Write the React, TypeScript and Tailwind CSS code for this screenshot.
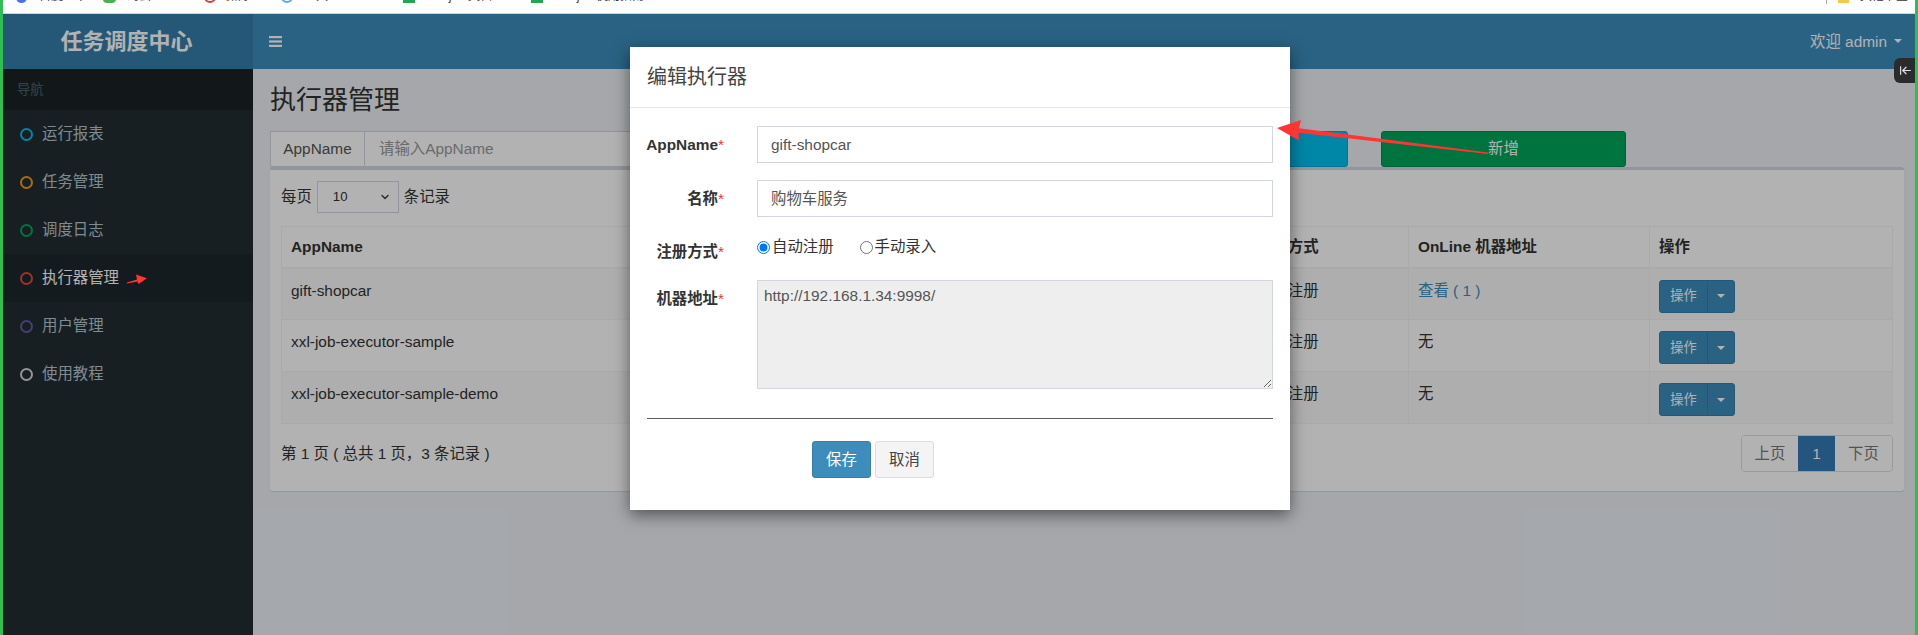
import { ArrowLeftToLine, ChevronDown } from "lucide-react"

const menu = [
  { label: "运行报表", ring: "border-[#00c0ef]" },
  { label: "任务管理", ring: "border-[#f39c12]" },
  { label: "调度日志", ring: "border-[#00a65a]" },
  { label: "执行器管理", ring: "border-[#dd4b39]", active: true },
  { label: "用户管理", ring: "border-[#605ca8]" },
  { label: "使用教程", ring: "border-[#d2d6de]" },
]

const groups = [
  { appname: "gift-shopcar", title: "购物车服务", online: "查看 ( 1 )", link: true },
  { appname: "xxl-job-executor-sample", title: "示例执行器", online: "无" },
  { appname: "xxl-job-executor-sample-demo", title: "示例执行器Demo", online: "无" },
]

function Caret({ className = "" }: { className?: string }) {
  return (
    <svg width="8" height="4" viewBox="0 0 8 4" className={className}>
      <path d="M0 0 L8 0 L4 4 Z" fill="currentColor" />
    </svg>
  )
}

function BookmarkBar() {
  return (
    <div className="flex h-[14px] items-start overflow-hidden border-b border-[#d4d4d4] bg-white text-[12px] leading-[12px] text-[#333]">
      <div className="-mt-[10px] ml-[16px] flex items-start gap-[12px]">
        <span className="h-[13px] w-[11px] rounded-full bg-[#4e6ef2]" />
        <span className="w-[46px] whitespace-nowrap">百度一下</span>
      </div>
      <div className="-mt-[10px] ml-[18px] flex items-start gap-[11px]">
        <span className="h-[13px] w-[13px] rounded-sm bg-[#4caf50]" />
        <span className="w-[58px] whitespace-nowrap">码云 Gitee</span>
      </div>
      <div className="-mt-[10px] ml-[19px] flex items-start gap-[9px]">
        <span className="h-[13px] w-[12px] rounded-full border-2 border-[#e0393e]" />
        <span className="w-[37px] whitespace-nowrap">微博</span>
      </div>
      <div className="-mt-[10px] ml-[19px] flex items-start gap-[11px]">
        <span className="h-[13px] w-[12px] rounded-full border-2 border-[#5aa9ee]" />
        <span className="w-[31px] whitespace-nowrap">工具</span>
      </div>
      <div className="-mt-[10px] ml-[68px] flex items-start gap-[15px]">
        <span className="h-[13px] w-[12px] bg-[#21a84f]" />
        <span className="w-[74px] whitespace-nowrap">xxl-job 文档</span>
      </div>
      <div className="-mt-[10px] ml-[27px] flex items-start gap-[15px]">
        <span className="h-[13px] w-[12px] bg-[#21a84f]" />
        <span className="w-[98px] whitespace-nowrap">xxl-job 使用指南</span>
      </div>
      <div className="-mt-[10px] ml-auto mr-[10px] flex items-start gap-[11px]">
        <span className="h-[14px] w-px bg-[#aaa]" />
        <span className="h-[13px] w-[11px] bg-[#f5c84b]" />
        <span className="w-[48px] whitespace-nowrap">其他书签</span>
      </div>
    </div>
  )
}

function Header() {
  return (
    <header className="flex h-[55px] shrink-0">
      <div className="flex w-[253px] items-center justify-center bg-[#367fa9] text-[22px] font-bold text-white">
        任务调度中心
      </div>
      <div className="flex flex-1 items-center justify-between bg-[#3c8dbc] pl-[16px] pr-[16px] text-white">
        <svg width="13" height="11" viewBox="0 0 13 11">
          <rect x="0" y="0" width="13" height="2.2" fill="currentColor" />
          <rect x="0" y="4.4" width="13" height="2.2" fill="currentColor" />
          <rect x="0" y="8.8" width="13" height="2.2" fill="currentColor" />
        </svg>
        <div className="flex items-center gap-[7px] text-[15.4px]">
          <span>欢迎 admin</span>
          <Caret />
        </div>
      </div>
    </header>
  )
}

function Sidebar() {
  return (
    <aside className="w-[253px] shrink-0 bg-[#222d32]">
      <div className="flex h-[41px] items-center bg-[#1a2226] pl-[17px] text-[13.2px] text-[#4b646f]">导航</div>
      {menu.map((m) => (
        <div
          key={m.label}
          className={`flex h-[48px] items-center pl-[20px] text-[15.4px] ${
            m.active ? "bg-[#1e282c] text-white" : "text-[#b8c7ce]"
          }`}
        >
          <span className={`h-[13px] w-[13px] rounded-full border-[2px] ${m.ring}`} />
          <span className="ml-[9px]">{m.label}</span>
        </div>
      ))}
    </aside>
  )
}

function OpButton() {
  return (
    <div className="inline-flex h-[33px] overflow-hidden rounded-[3px] border border-[#367fa9] bg-[#3c8dbc] text-[13.2px] text-white">
      <span className="flex w-[47px] items-center justify-center">操作</span>
      <span className="flex w-[27px] items-center justify-center border-l border-[#367fa9]">
        <Caret />
      </span>
    </div>
  )
}

function Content() {
  return (
    <main className="flex-1 bg-[#ecf0f5] pl-[17px] pr-[14px] text-[15.4px] text-[#333]">
      <h1 className="mb-[17px] pt-[17px] text-[26px] leading-[28px] font-normal">执行器管理</h1>

      {/* Filters */}
      <div className="flex h-[36px] gap-[33px]">
        <div className="flex w-[384px]">
          <span className="flex w-[95px] items-center justify-center border border-[#d2d6de] bg-white text-[#555]">
            AppName
          </span>
          <span className="flex flex-1 items-center border border-l-0 border-[#d2d6de] bg-white pl-[14px] text-[#999]">
            请输入AppName
          </span>
        </div>
        <div className="flex w-[383px]">
          <span className="flex w-[66px] items-center justify-center border border-[#d2d6de] bg-white text-[#555]">
            名称
          </span>
          <span className="flex flex-1 items-center border border-l-0 border-[#d2d6de] bg-white pl-[14px] text-[#999]">
            请输入名称
          </span>
        </div>
        <button className="w-[245px] rounded-[3px] border border-[#00acd6] bg-[#00c0ef] text-white">搜索</button>
        <button className="w-[245px] rounded-[3px] border border-[#008d4c] bg-[#00a65a] text-white">新增</button>
      </div>

      {/* Box */}
      <div className="rounded-[3px] border-t-[3px] border-[#d2d6de] bg-white p-[11px] shadow-[0_1px_1px_rgba(0,0,0,0.1)]">
        <div className="flex h-[32px] items-center">
          <span>每页</span>
          <div className="ml-[5px] flex h-[32px] w-[82px] items-center justify-between border border-[#d2d6de] bg-white pl-[15px] pr-[7px] text-[13.2px] text-[#333]">
            <span>10</span>
            <ChevronDown size={12} strokeWidth={3} className="text-[#444]" />
          </div>
          <span className="ml-[5px]">条记录</span>
        </div>

        <table className="mt-[13px] w-full table-fixed border-collapse border border-[#f4f4f4]">
          <colgroup>
            <col className="w-[483px]" />
            <col className="w-[483px]" />
            <col className="w-[161px]" />
            <col className="w-[241px]" />
            <col />
          </colgroup>
          <thead>
            <tr className="h-[41px]">
              {["AppName", "名称", "注册方式", "OnLine 机器地址", "操作"].map((h) => (
                <th key={h} className="border border-b-2 border-[#f4f4f4] px-[9px] text-left font-bold">
                  {h}
                </th>
              ))}
            </tr>
          </thead>
          <tbody>
            {groups.map((g, i) => (
              <tr key={g.appname} className={`h-[52px] ${i % 2 === 0 ? "bg-[#f9f9f9]" : "bg-white"}`}>
                <td className="border border-[#f4f4f4] px-[9px] pt-[11px] align-top leading-[22px]">{g.appname}</td>
                <td className="border border-[#f4f4f4] px-[9px] pt-[11px] align-top leading-[22px]">{g.title}</td>
                <td className="border border-[#f4f4f4] px-[9px] pt-[11px] align-top leading-[22px]">自动注册</td>
                <td
                  className={`border border-[#f4f4f4] px-[9px] pt-[11px] align-top leading-[22px] ${
                    g.link ? "text-[#3c8dbc]" : ""
                  }`}
                >
                  {g.online}
                </td>
                <td className="border border-[#f4f4f4] px-[9px] pt-[11px] align-top">
                  <OpButton />
                </td>
              </tr>
            ))}
          </tbody>
        </table>

        <div className="mb-[8px] mt-[11px] flex h-[37px] items-center justify-between">
          <span>第 1 页 ( 总共 1 页，3 条记录 )</span>
          <div className="flex h-[37px] overflow-hidden rounded-[4px] border border-[#ddd] text-[15.4px]">
            <span className="flex w-[56px] items-center justify-center bg-white text-[#777]">上页</span>
            <span className="flex w-[37px] items-center justify-center bg-[#337ab7] text-white">1</span>
            <span className="flex w-[57px] items-center justify-center bg-white text-[#777]">下页</span>
          </div>
        </div>
      </div>
    </main>
  )
}

function FormRow({ label, children, labelClass = "pt-[8px]" }: { label: string; children: React.ReactNode; labelClass?: string }) {
  return (
    <div className="flex">
      <label className={`w-[110px] pr-[16px] text-right text-[15.4px] leading-[22px] font-bold text-[#333] ${labelClass}`}>
        {label}
        <span className="font-normal text-[#e33]">*</span>
      </label>
      <div className="w-[550px] pl-[17px] pr-[17px]">{children}</div>
    </div>
  )
}

function EditModal() {
  return (
    <div className="absolute left-[630px] top-[33px] h-[463px] w-[660px] bg-white text-[15.4px] text-[#555] shadow-[0_5px_15px_rgba(0,0,0,0.5)]">
      <div className="flex h-[61px] items-center border-b border-[#e5e5e5] px-[17px] text-[20px] text-[#444]">
        编辑执行器
      </div>
      <div className="pt-[18px]">
        <div className="flex flex-col gap-[17px]">
          <FormRow label="AppName">
            <div className="flex h-[37px] w-[516px] items-center border border-[#d2d6de] px-[13px]">gift-shopcar</div>
          </FormRow>
          <FormRow label="名称">
            <div className="flex h-[37px] w-[516px] items-center border border-[#d2d6de] px-[13px]">购物车服务</div>
          </FormRow>
          <FormRow label="注册方式" labelClass="pt-[7px]">
            <div className="flex items-center pt-[2px] leading-[22px] text-[#333]">
              <input type="radio" name="addressType" defaultChecked className="m-0 h-[13px] w-[13px]" />
              <span className="ml-[2px]">自动注册</span>
              <input type="radio" name="addressType" className="m-0 ml-[26px] h-[13px] w-[13px]" />
              <span className="ml-[2px]">手动录入</span>
            </div>
          </FormRow>
          <FormRow label="机器地址">
            <textarea
              readOnly
              defaultValue="http://192.168.1.34:9998/"
              className="block h-[109px] w-[516px] border border-[#d2d6de] bg-[#eee] px-[6px] py-[4px] text-[15.4px] leading-[22px] text-[#555] outline-none"
            />
          </FormRow>
        </div>
        <div className="mx-[17px] mt-[29px] h-px bg-[#5c5c5c]" />
        <div className="ml-[182px] mt-[22px] flex gap-[4px]">
          <button className="h-[37px] w-[59px] rounded-[3px] border border-[#367fa9] bg-[#3c8dbc] text-white">保存</button>
          <button className="h-[37px] w-[59px] rounded-[3px] border border-[#ddd] bg-[#f4f4f4] text-[#444]">取消</button>
        </div>
      </div>
    </div>
  )
}

export default function App() {
  return (
    <div className="relative h-[635px] w-[1918px] overflow-hidden bg-white font-['Liberation_Sans','Noto_Sans_CJK_SC',sans-serif]">
      <BookmarkBar />
      <div className="relative flex h-[621px] flex-col">
        <Header />
        <div className="flex flex-1">
          <Sidebar />
          <Content />
        </div>
        {/* modal backdrop */}
        <div className="absolute inset-0 bg-black/30" />
        <EditModal />
      </div>

      {/* annotation arrows */}
      <svg className="pointer-events-none absolute inset-0" width="1918" height="635" viewBox="0 0 1918 635">
        <polygon
          points="1277,128 1301,120 1299,128.3 1488,152.6 1488,154 1298.5,132.8 1299,140.5"
          fill="#ff3535"
        />
        <polygon points="127,282.5 137,279.6 136,274.6 147,278.3 138.5,284 137.5,281.6 127,283.6" fill="#ff3535" />
      </svg>

      {/* browser side-panel toggle */}
      <div className="absolute left-[1894px] top-[58px] flex h-[25px] w-[24px] items-center rounded-l-[6px] bg-[#2b2b2b] pl-[5px] text-[#ddd]">
        <ArrowLeftToLine size={13} strokeWidth={2.2} />
      </div>

      {/* window frame */}
      <div className="absolute left-0 top-0 h-full w-[3px] bg-[#2fbf4f]" />
      <div className="absolute right-0 top-0 h-full w-[3px] bg-[#2fbf4f]" />
    </div>
  )
}
